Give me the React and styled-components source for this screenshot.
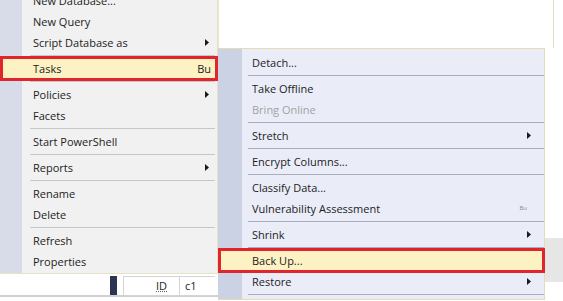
import React from "react";
import styled, { createGlobalStyle } from "styled-components";

const GlobalStyle = createGlobalStyle`
  html, body {
    margin: 0;
    padding: 0;
    background: #ffffff;
    overflow: hidden;
  }
  body {
    font-family: "Open Sans", "Noto Sans", sans-serif;
    font-size: 11px;
    color: #1c1c1c;
  }
`;

const Screen = styled.div`
  width: 563px;
  height: 301px;
  overflow: hidden;
  display: grid;
  grid-template-columns: 218px 1fr;
  background: #ffffff;
`;

const Column = styled.div`
  display: flex;
  flex-direction: column;
  min-width: 0;
`;

const Menu = styled.div`
  position: relative;
  display: flex;
  flex-direction: column;
  box-sizing: border-box;
  background: ${(p) =>
    p.$sub
      ? "linear-gradient(to right, #cbd2e4 0 24px, #eaedf8 24px)"
      : "linear-gradient(to right, #d7dce8 0 22px, #f1f1f1 22px)"};
  border: 1px solid ${(p) => (p.$sub ? "#e4ddb4" : "#e8e2c4")};
  border-left: none;
  ${(p) =>
    p.$sub
      ? `width: 327px; padding: 3px 0 2px 0;`
      : `margin-top: -11px; padding: 1px 0 1px 0; border-top: none;`}
`;

const Item = styled.div`
  position: relative;
  height: 21px;
  line-height: 21px;
  display: flex;
  align-items: center;
  padding-left: ${(p) => (p.$sub ? "34px" : "33px")};
  padding-right: ${(p) => (p.$sub ? "11px" : "6px")};
  color: ${(p) => (p.$disabled ? "#a2a2a2" : "#1c1c1c")};
  white-space: nowrap;
  background: ${(p) => (p.$hot ? "#fcf2c4" : "transparent")};

  ${(p) =>
    p.$hot &&
    `
    &::after {
      content: "";
      position: absolute;
      left: 0;
      right: -1px;
      top: -2px;
      bottom: -2px;
      border: 3px solid #e0262c;
      box-sizing: border-box;
      pointer-events: none;
    }
  `}
`;

const Label = styled.span`
  flex: 1;
`;

const Shortcut = styled.span`
  font-size: ${(p) => (p.$tiny ? "6px" : "11px")};
  color: ${(p) => (p.$tiny ? "#8a8a8a" : "#1c1c1c")};
  padding-right: ${(p) => (p.$tiny ? "6px" : "0")};
`;

const Separator = styled.div`
  height: 5px;
  display: flex;
  align-items: center;
  padding-left: ${(p) => (p.$sub ? "30px" : "30px")};
  padding-right: ${(p) => (p.$sub ? "0" : "2px")};

  &::before {
    content: "";
    flex: 1;
    height: 1px;
    background: ${(p) => (p.$sub ? "#a9aebf" : "#c6c6c6")};
  }
`;

const Arrow = () => (
  <svg width="4" height="7" viewBox="0 0 4 7" style={{ marginRight: 2 }}>
    <polygon points="0,0 4,3.5 0,7" fill="#1a1a1a" />
  </svg>
);

const BottomPane = styled.div`
  height: 23px;
  border-bottom: 2px solid #d0d0d0;
  display: flex;
  align-items: flex-start;
  padding: 2px 0 0 110px;
  box-sizing: border-box;
  gap: 6px;
`;

const NavyBar = styled.div`
  width: 7px;
  height: 19px;
  background: #2b3450;
`;

const GridBox = styled.div`
  width: 92px;
  height: 20px;
  border: 1px solid #d4d4d4;
  border-right: none;
  box-sizing: border-box;
  display: grid;
  grid-template-columns: 29px 26px 1fr;
  font-size: 11px;
  line-height: 18px;
`;

const Cell = styled.div`
  padding-left: ${(p) => p.$pad || "4px"};
  border-left: ${(p) => (p.$line ? "1px solid #d4d4d4" : "none")};
  text-decoration: ${(p) => (p.$dotted ? "underline dotted #666" : "none")};
`;

const TopPanel = styled.div`
  width: 336px;
  height: 48px;
  box-sizing: border-box;
  background: #ffffff;
  border-left: 1px solid #ece6c6;
  border-right: 1px solid #e6dfb8;
`;

const SubRow = styled.div`
  display: flex;
  align-items: flex-start;
`;

const SideStrip = styled.div`
  flex: 1;
  height: 44px;
  margin-top: 190px;
  background: #e6e6e6;
`;

const leftItems = [
  { label: "New Database..." },
  { label: "New Query" },
  { label: "Script Database as", arrow: true },
  { sep: true },
  { label: "Tasks", shortcut: "Bu", hot: true },
  { sep: true },
  { label: "Policies", arrow: true },
  { label: "Facets" },
  { sep: true },
  { label: "Start PowerShell" },
  { sep: true },
  { label: "Reports", arrow: true },
  { sep: true },
  { label: "Rename" },
  { label: "Delete" },
  { sep: true },
  { label: "Refresh" },
  { label: "Properties" },
];

const subItems = [
  { label: "Detach..." },
  { sep: true },
  { label: "Take Offline" },
  { label: "Bring Online", disabled: true },
  { sep: true },
  { label: "Stretch", arrow: true },
  { sep: true },
  { label: "Encrypt Columns..." },
  { sep: true },
  { label: "Classify Data..." },
  { label: "Vulnerability Assessment", tiny: "Bu" },
  { sep: true },
  { label: "Shrink", arrow: true },
  { sep: true },
  { label: "Back Up...", hot: true },
  { label: "Restore", arrow: true },
  { sep: true },
];

const renderItems = (items, sub) =>
  items.map((it, i) =>
    it.sep ? (
      <Separator key={i} $sub={sub} />
    ) : (
      <Item key={i} $sub={sub} $hot={it.hot} $disabled={it.disabled}>
        <Label>{it.label}</Label>
        {it.shortcut && <Shortcut>{it.shortcut}</Shortcut>}
        {it.tiny && <Shortcut $tiny>{it.tiny}</Shortcut>}
        {it.arrow && <Arrow />}
      </Item>
    )
  );

export default function App() {
  return (
    <>
      <GlobalStyle />
      <Screen>
        <Column>
          <Menu>{renderItems(leftItems, false)}</Menu>
          <BottomPane>
            <NavyBar />
            <GridBox>
              <Cell />
              <Cell $pad="3px" $dotted>
                ID
              </Cell>
              <Cell $line $pad="5px">
                c1
              </Cell>
            </GridBox>
          </BottomPane>
        </Column>
        <Column>
          <TopPanel />
          <SubRow>
            <Menu $sub>{renderItems(subItems, true)}</Menu>
            <SideStrip />
          </SubRow>
        </Column>
      </Screen>
    </>
  );
}
